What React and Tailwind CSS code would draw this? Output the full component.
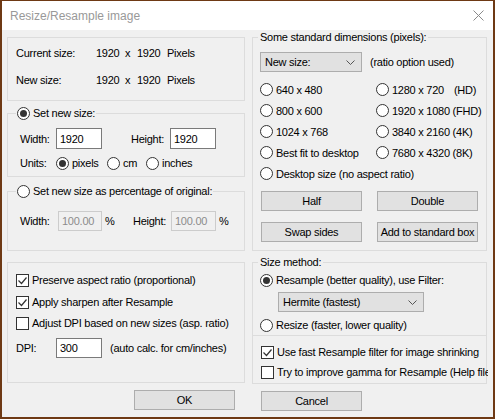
import React from 'react';

const Radio = ({ checked, children, className = '' }) => (
  <div className={`flex items-center gap-[3px] whitespace-nowrap ${className}`}>
    <span className="flex h-[13px] w-[13px] shrink-0 items-center justify-center rounded-full border border-[#333333] bg-white">
      {checked && <span className="h-[7px] w-[7px] rounded-full bg-[#333333]" />}
    </span>
    <span>{children}</span>
  </div>
);

const Check = ({ checked, children, className = '' }) => (
  <div className={`flex h-[14px] items-center gap-[3px] whitespace-nowrap ${className}`}>
    <span className="flex h-[13px] w-[13px] shrink-0 items-center justify-center border border-[#333333] bg-white">
      {checked && (
        <svg width="11" height="11" viewBox="0 0 11 11">
          <polyline points="1.5,5.5 4.5,8.5 9.5,2.5" fill="none" stroke="#333333" strokeWidth="1.2" />
        </svg>
      )}
    </span>
    <span>{children}</span>
  </div>
);

const GroupBox = ({ title, legendClass = 'left-[5px] px-[2px]', className = '', children }) => (
  <div className={`relative border border-[#dcdcdc] ${className}`}>
    {title && <div className={`absolute -top-[8px] flex h-[14px] items-center bg-[#f0f0f0] ${legendClass}`}>{title}</div>}
    {children}
  </div>
);

const Field = ({ value, disabled, className = '' }) => (
  <div
    className={`flex items-center border px-[3px] ${
      disabled ? 'border-[#cccccc] bg-[#f0f0f0] text-[#8c8c8c]' : 'border-[#7a7a7a] bg-white text-black'
    } ${className}`}
  >
    {value}
  </div>
);

const Button = ({ children, className = '' }) => (
  <div className={`flex h-[20px] w-[101px] items-center justify-center border border-[#adadad] bg-[#e1e1e1] ${className}`}>
    {children}
  </div>
);

const Chevron = () => (
  <svg width="9" height="5" viewBox="0 0 9 5">
    <polyline points="0.5,0.5 4.5,4.5 8.5,0.5" fill="none" stroke="#555555" strokeWidth="1" />
  </svg>
);

const Select = ({ value, className = '' }) => (
  <div className={`flex h-[20px] items-center justify-between border border-[#adadad] bg-[#e1e1e1] pl-[4px] pr-[6px] ${className}`}>
    <span>{value}</span>
    <Chevron />
  </div>
);

export default function App() {
  return (
    <div className="flex h-[419px] w-[495px] flex-col bg-[#6e3914] px-[2px] pt-px pb-[2px] font-['Liberation_Sans',Arial,sans-serif] text-[11px] leading-[14px] tracking-[-0.25px] text-black">
      {/* Title bar */}
      <div className="flex h-[29px] shrink-0 items-center justify-between bg-white pl-[8px] pr-[9px]">
        <span className="text-[12px] tracking-normal text-[#999999]">Resize/Resample image</span>
        <svg width="11" height="11" viewBox="0 0 11 11">
          <path d="M0.5 0.5 L10.5 10.5 M10.5 0.5 L0.5 10.5" stroke="#8a8a8a" strokeWidth="1" />
        </svg>
      </div>

      {/* Body */}
      <div className="flex flex-1 gap-[7px] bg-[#f0f0f0] pl-[5px] pt-[7px]">
        {/* Left column */}
        <div className="flex w-[238px] flex-col">
          <GroupBox className="h-[64px] pl-[8px] pt-[8px]">
            <div className="flex h-[14px] items-center">
              <span className="w-[80px]">Current size:</span>
              <span className="w-[29px]">1920</span>
              <span className="w-[12px]">x</span>
              <span className="w-[30px]">1920</span>
              <span>Pixels</span>
            </div>
            <div className="mt-[13px] flex h-[14px] items-center">
              <span className="w-[80px]">New size:</span>
              <span className="w-[29px]">1920</span>
              <span className="w-[12px]">x</span>
              <span className="w-[30px]">1920</span>
              <span>Pixels</span>
            </div>
          </GroupBox>

          <GroupBox
            title={<Radio checked>Set new size:</Radio>}
            legendClass="left-[8px] px-[1px]"
            className="mt-[12px] h-[64px] pl-[12px] pt-[14px]"
          >
            <div className="flex h-[21px] items-center">
              <span className="w-[36px]">Width:</span>
              <Field value="1920" className="h-[21px] w-[46px]" />
              <span className="ml-[29px] w-[39px]">Height:</span>
              <Field value="1920" className="h-[21px] w-[46px]" />
            </div>
            <div className="mt-[7px] flex h-[14px] items-center">
              <span className="w-[36px]">Units:</span>
              <Radio checked className="w-[51px]">pixels</Radio>
              <Radio className="w-[39px]">cm</Radio>
              <Radio>inches</Radio>
            </div>
          </GroupBox>

          <GroupBox
            title={<Radio>Set new size as percentage of original:</Radio>}
            legendClass="left-[8px] px-[1px]"
            className="mt-[14px] h-[60px] pl-[12px] pt-[19px]"
          >
            <div className="flex h-[20px] items-center">
              <span className="w-[38px]">Width:</span>
              <Field value="100.00" disabled className="h-[20px] w-[44px]" />
              <span className="ml-[3px] w-[28px]">%</span>
              <span className="w-[38px]">Height:</span>
              <Field value="100.00" disabled className="h-[20px] w-[45px]" />
              <span className="ml-[3px]">%</span>
            </div>
          </GroupBox>

          <GroupBox className="mt-[11px] h-[121px] pl-[8px] pt-[10px]">
            <Check checked>Preserve aspect ratio (proportional)</Check>
            <Check checked className="mt-[8px]">Apply sharpen after Resample</Check>
            <Check className="mt-[7px]">Adjust DPI based on new sizes (asp. ratio)</Check>
            <div className="mt-[8px] flex h-[20px] items-center">
              <span className="w-[40px]">DPI:</span>
              <Field value="300" className="h-[20px] w-[46px]" />
              <span className="ml-[8px]">(auto calc. for cm/inches)</span>
            </div>
          </GroupBox>

          <Button className="ml-[127px] mt-[7px]">OK</Button>
        </div>

        {/* Right column */}
        <div className="flex w-[235px] flex-col">
          <GroupBox title="Some standard dimensions (pixels):" className="h-[214px] pl-[7px] pt-[14px]">
            <div className="flex h-[20px] items-center">
              <Select value="New size:" className="w-[102px]" />
              <span className="ml-[8px]">(ratio option used)</span>
            </div>
            <div className="mt-[7px] grid grid-cols-[116px_1fr] auto-rows-[21px] items-center">
              <Radio>640 x 480</Radio>
              <Radio>
                1280 x 720<span className="ml-[10px]">(HD)</span>
              </Radio>
              <Radio>800 x 600</Radio>
              <Radio>1920 x 1080 (FHD)</Radio>
              <Radio>1024 x 768</Radio>
              <Radio>3840 x 2160 (4K)</Radio>
              <Radio>Best fit to desktop</Radio>
              <Radio>7680 x 4320 (8K)</Radio>
              <Radio className="col-span-2">Desktop size (no aspect ratio)</Radio>
            </div>
            <div className="ml-[1px] mt-[7px] flex gap-[15px]">
              <Button>Half</Button>
              <Button>Double</Button>
            </div>
            <div className="ml-[1px] mt-[11px] flex gap-[15px]">
              <Button>Swap sides</Button>
              <Button>Add to standard box</Button>
            </div>
          </GroupBox>

          <GroupBox title="Size method:" className="mt-[11px] h-[74px] pl-[7px] pt-[10px]">
            <Radio checked className="h-[14px]">Resample (better quality), use Filter:</Radio>
            <Select value="Hermite (fastest)" className="ml-[18px] mt-[5px] w-[146px]" />
            <Radio className="mt-[6px] h-[14px]">Resize (faster, lower quality)</Radio>
          </GroupBox>

          <div className="h-[48px] border border-t-0 border-[#dcdcdc] pl-[8px] pt-[9px]">
            <Check checked>Use fast Resample filter for image shrinking</Check>
            <div className="mt-[6px] w-[227px] overflow-hidden">
              <Check>Try to improve gamma for Resample (Help file)</Check>
            </div>
          </div>

          <Button className="ml-[9px] mt-[7px]">Cancel</Button>
        </div>
      </div>
    </div>
  );
}
